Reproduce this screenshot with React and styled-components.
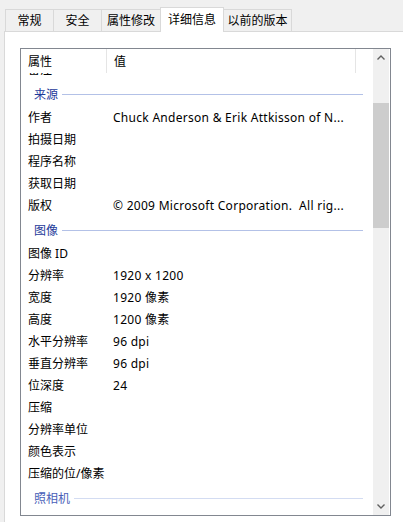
import styled, { createGlobalStyle } from "styled-components";

const GlobalStyle = createGlobalStyle`
  html, body {
    margin: 0;
    padding: 0;
    background: #f0f0f0;
    overflow: hidden;
  }
  body {
    font-family: "Noto Sans", "Noto Sans CJK SC", sans-serif;
    font-size: 12px;
    color: #000;
  }
`;

const Page = styled.div`
  width: 403px;
  height: 522px;
  padding: 7px 0 0 4px;
  box-sizing: border-box;
  overflow: hidden;
`;

const TabStrip = styled.div`
  display: flex;
  align-items: flex-end;
  height: 25px;
  padding-left: 1px;
  margin-bottom: -1px;
  position: relative;
  z-index: 1;
`;

const Tab = styled.div`
  box-sizing: border-box;
  width: ${(p) => p.$w}px;
  height: ${(p) => (p.$active ? 25 : 23)}px;
  margin-left: -1px;
  border: 1px solid #d9d9d9;
  border-bottom: ${(p) => (p.$active ? "none" : "1px solid #d9d9d9")};
  background: ${(p) => (p.$active ? "#fff" : "#f0f0f0")};
  display: flex;
  justify-content: center;
  align-items: center;
  padding-top: 1px;
  padding-bottom: ${(p) => (p.$active ? 1 : 0)}px;
  line-height: 16px;
  white-space: nowrap;
  &:first-child {
    margin-left: 0;
  }
`;

const Panel = styled.div`
  background: #fff;
  border: 1px solid #d9d9d9;
  width: 420px;
  height: 520px;
  box-sizing: border-box;
  padding: 16px 0 0 15px;
`;

const ListBox = styled.div`
  width: 371px;
  height: 468px;
  box-sizing: border-box;
  border: 1px solid #828790;
  display: flex;
  background: #fff;
`;

const Viewport = styled.div`
  width: 352px;
  display: flex;
  flex-direction: column;
  overflow: hidden;
`;

const Header = styled.div`
  display: flex;
  height: 24px;
  flex-shrink: 0;
  background: #fff;
  position: relative;
  z-index: 1;
`;

const HeaderCell = styled.div`
  box-sizing: border-box;
  width: ${(p) => p.$w}px;
  flex: ${(p) => (p.$w ? "none" : "1")};
  border-right: ${(p) => (p.$sep ? "1px solid #e5e5e5" : "none")};
  padding: 2px 0 0 7px;
  display: flex;
  align-items: center;
  line-height: 16px;
`;

const Body = styled.div`
  flex: 1;
  overflow: hidden;
`;

const Scrolled = styled.div`
  margin-top: -15px;
`;

const Row = styled.div`
  display: flex;
  height: 22px;
  box-sizing: border-box;
  padding-top: 2px;
  align-items: center;
  line-height: 16px;
  white-space: pre;
`;

const Label = styled.div`
  width: 86px;
  box-sizing: border-box;
  padding-left: 7px;
  flex-shrink: 0;
`;

const Value = styled.div`
  padding-left: 6px;
  letter-spacing: 0.28px;
`;

const Group = styled.div`
  display: flex;
  align-items: center;
  height: 26px;
  box-sizing: border-box;
  padding: 3px 10px 0 13px;
  gap: 4px;
  color: ${(p) => (p.$faded ? "#4a5fb8" : "#1e3a9a")};
  line-height: 16px;
  &::after {
    content: "";
    flex: 1;
    height: 1px;
    background: ${(p) => (p.$faded ? "#d3dcf2" : "#b3c1e7")};
  }
`;

const Scrollbar = styled.div`
  width: 16px;
  margin-right: 1px;
  background: #f0f0f0;
  display: flex;
  flex-direction: column;
`;

const ArrowButton = styled.div`
  height: 17px;
  display: flex;
  align-items: center;
  justify-content: center;
  flex-shrink: 0;
`;

const Track = styled.div`
  flex: 1;
`;

const Thumb = styled.div`
  margin-top: 37px;
  height: 125px;
  background: #cdcdcd;
`;

function Chevron({ up }) {
  return (
    <svg width="8" height="5" viewBox="0 0 8 5">
      <polyline
        points={up ? "0.5,4.5 4,1 7.5,4.5" : "0.5,0.5 4,4 7.5,0.5"}
        fill="none"
        stroke="#606060"
        strokeWidth="1.4"
      />
    </svg>
  );
}

const tabs = [
  { name: "常规", w: 49 },
  { name: "安全", w: 49 },
  { name: "属性修改", w: 60 },
  { name: "详细信息", w: 64, active: true },
  { name: "以前的版本", w: 69 },
];

const items = [
  { label: "备注" },
  { group: "来源" },
  { label: "作者", value: "Chuck Anderson & Erik Attkisson of N..." },
  { label: "拍摄日期" },
  { label: "程序名称" },
  { label: "获取日期" },
  { label: "版权", value: "© 2009 Microsoft Corporation.  All rig..." },
  { group: "图像" },
  { label: "图像 ID" },
  { label: "分辨率", value: "1920 x 1200" },
  { label: "宽度", value: "1920 像素" },
  { label: "高度", value: "1200 像素" },
  { label: "水平分辨率", value: "96 dpi" },
  { label: "垂直分辨率", value: "96 dpi" },
  { label: "位深度", value: "24" },
  { label: "压缩" },
  { label: "分辨率单位" },
  { label: "颜色表示" },
  { label: "压缩的位/像素" },
  { group: "照相机", faded: true },
];

export default function App() {
  return (
    <Page>
      <GlobalStyle />
      <TabStrip>
        {tabs.map((t) => (
          <Tab key={t.name} $w={t.w} $active={t.active}>
            {t.name}
          </Tab>
        ))}
      </TabStrip>
      <Panel>
        <ListBox>
          <Viewport>
            <Header>
              <HeaderCell $w={86} $sep>
                属性
              </HeaderCell>
              <HeaderCell $w={249} $sep>
                值
              </HeaderCell>
              <HeaderCell />
            </Header>
            <Body>
              <Scrolled>
                {items.map((it, i) =>
                  it.group ? (
                    <Group key={i} $faded={it.faded}>
                      {it.group}
                    </Group>
                  ) : (
                    <Row key={i}>
                      <Label>{it.label}</Label>
                      <Value>{it.value}</Value>
                    </Row>
                  )
                )}
              </Scrolled>
            </Body>
          </Viewport>
          <Scrollbar>
            <ArrowButton>
              <Chevron up />
            </ArrowButton>
            <Track>
              <Thumb />
            </Track>
            <ArrowButton>
              <Chevron />
            </ArrowButton>
          </Scrollbar>
        </ListBox>
      </Panel>
    </Page>
  );
}
